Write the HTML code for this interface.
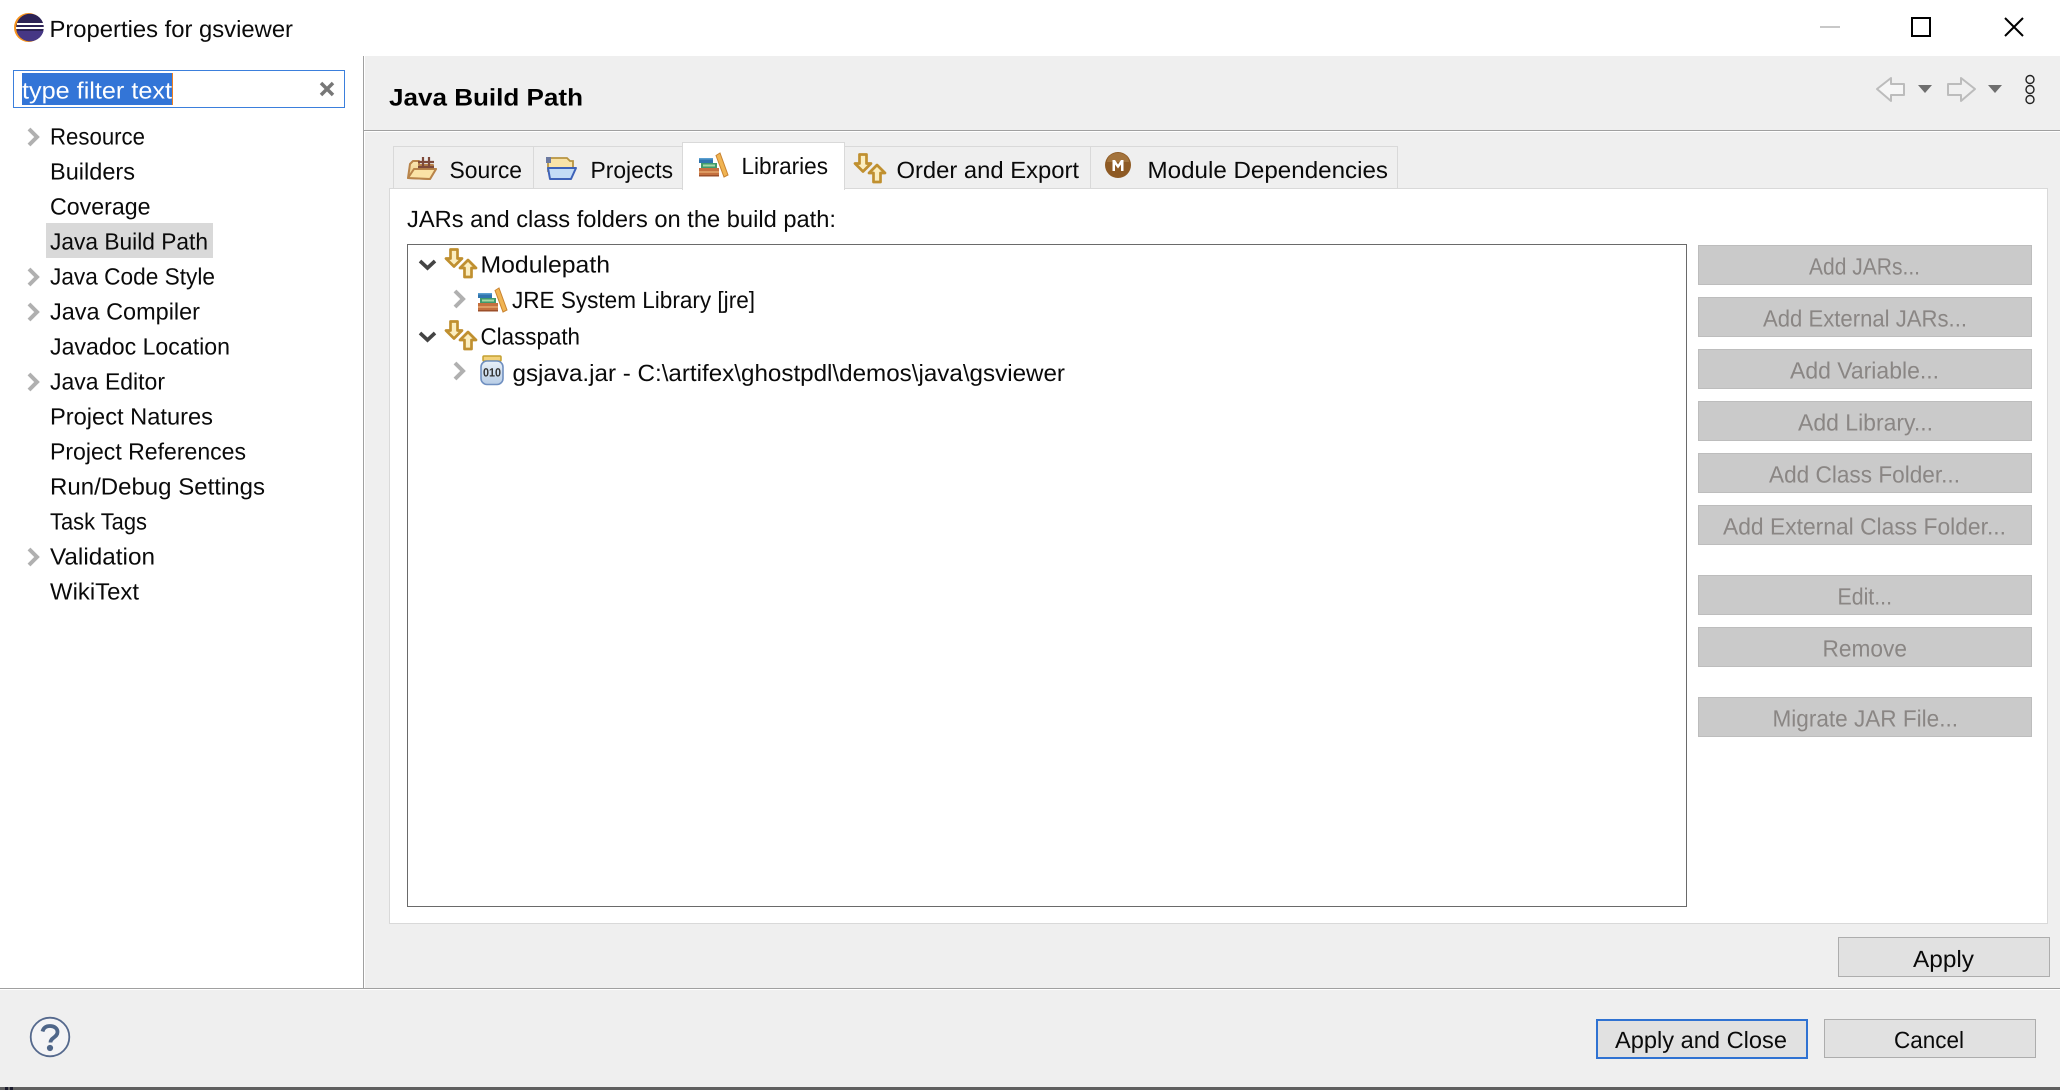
<!DOCTYPE html>
<html lang="en"><head><meta charset="utf-8"><title>Properties for gsviewer</title>
<style>
html,body{margin:0;padding:0;background:#fff;width:2060px;height:1090px;overflow:hidden}
svg{display:block}
text{font-family:"Liberation Sans",Arial,sans-serif;font-size:23.5px;fill:#0a0a0a;text-rendering:geometricPrecision}
.c{shape-rendering:crispEdges}
.d{fill:#8a8684}
</style></head><body>
<svg width="2060" height="1090" viewBox="0 0 2060 1090" xmlns="http://www.w3.org/2000/svg">
<defs>
<linearGradient id="fold" x1="0" y1="0" x2="0" y2="1"><stop offset="0" stop-color="#fbe8b4"/><stop offset="1" stop-color="#e9c27a"/></linearGradient>
<linearGradient id="jar" x1="0" y1="0" x2="0" y2="1"><stop offset="0" stop-color="#e8f0f8"/><stop offset="1" stop-color="#b8cde6"/></linearGradient>
<g id="chev"><path d="M1 1 L9 9 L1 17" fill="none" stroke="#b0b0b0" stroke-width="4"/></g>
<g id="arrows">
<path d="M4.500 1.500h7v9h4.500l-8 8-8-8h4.500z" fill="#fbeec0" stroke="#c09030" stroke-width="2.700" stroke-linejoin="round"/>
<path d="M22 12l8 8h-4.500v9h-7v-9h-4.500z" fill="#fbeec0" stroke="#c09030" stroke-width="2.700" stroke-linejoin="round"/>
</g>
<g id="books">
<path d="M0 23V15h20v8z" fill="#c4703f"/><path d="M0 18h20v2H0z" fill="#dd9a62"/><path d="M0 22h20v1.500H0z" fill="#9c4f2a"/>
<path d="M2 15V10h16v5z" fill="#3f9a6d"/><path d="M4 11.500h12v2H4z" fill="#a5d8a5"/>
<path d="M0 10V5h14v5z" fill="#2f74ae"/><path d="M0 5h14v1.500H0z" fill="#5a9fd0"/>
<path d="M17 2.500l4-2.500 8 22-4 2z" fill="#f0b452" stroke="#c98330" stroke-width="1"/>
</g>
</defs>

<!-- surfaces -->
<g class="c">
<rect width="2060" height="1090" fill="#fff"/>
<rect x="364" y="56" width="1696" height="932" fill="#efefef"/>
<rect x="0" y="989" width="2060" height="98" fill="#efefef"/>
<rect x="363" y="56" width="1" height="932" fill="#a0a0a0"/>
<rect x="364" y="56" width="1" height="932" fill="#fff"/>
<rect x="364" y="130" width="1696" height="1" fill="#a0a0a0"/>
<rect x="364" y="131" width="1696" height="1" fill="#fff"/>
<rect x="0" y="988" width="2060" height="1" fill="#a0a0a0"/>
<rect x="0" y="989" width="2060" height="1" fill="#fff"/>
<rect x="0" y="1087" width="2060" height="3" fill="#5f5f5f"/>
<rect x="5" y="1087" width="3" height="3" fill="#1c1c2c"/><rect x="10" y="1087" width="3" height="3" fill="#1c1c2c"/>
</g>

<!-- title bar -->
<circle cx="28.500" cy="27.500" r="14.500" fill="#f7941e"/>
<circle cx="30" cy="27.500" r="13.800" fill="#2c2255"/>
<path d="M16.500 31h27a14 14 0 0 1-27 0z" fill="#463785"/>
<g class="c" fill="#fff"><rect x="17" y="23" width="27" height="2"/><rect x="16" y="27" width="28" height="2"/></g>
<text x="49.500" y="37" textLength="243.500" lengthAdjust="spacingAndGlyphs">Properties for gsviewer</text>
<g class="c">
<rect x="1820" y="26" width="20" height="2" fill="#c8c8c8"/>
<rect x="1912" y="18" width="18" height="18" fill="none" stroke="#000" stroke-width="2"/>
</g>
<path d="M2005 18l18 18M2023 18l-18 18" stroke="#000" stroke-width="2" fill="none"/>

<!-- filter -->
<rect class="c" x="13.500" y="70.500" width="331" height="37" fill="#fff" stroke="#3b7fdc"/>
<rect class="c" x="22" y="73" width="150" height="32" fill="#3375d7"/>
<rect class="c" x="172" y="73" width="1" height="32" fill="#f08020"/>
<text x="22" y="98.500" textLength="150" lengthAdjust="spacingAndGlyphs" style="fill:#fff">type filter text</text>
<path d="M321 83l12 12M333 83l-12 12" stroke="#777" stroke-width="3.500" fill="none"/>

<!-- sidebar tree -->
<rect class="c" x="46" y="223" width="167" height="35" fill="#d9d9d9"/>
<use href="#chev" x="28" y="128"/>
<use href="#chev" x="28" y="268"/>
<use href="#chev" x="28" y="303"/>
<use href="#chev" x="28" y="373"/>
<use href="#chev" x="28" y="548"/>
<text x="50" y="144.500" textLength="95" lengthAdjust="spacingAndGlyphs">Resource</text>
<text x="50" y="179.500" textLength="85" lengthAdjust="spacingAndGlyphs">Builders</text>
<text x="50" y="214.500" textLength="100.500" lengthAdjust="spacingAndGlyphs">Coverage</text>
<text x="50" y="249.500" textLength="158" lengthAdjust="spacingAndGlyphs">Java Build Path</text>
<text x="50" y="284.500" textLength="165" lengthAdjust="spacingAndGlyphs">Java Code Style</text>
<text x="50" y="319.500" textLength="150" lengthAdjust="spacingAndGlyphs">Java Compiler</text>
<text x="50" y="354.500" textLength="180" lengthAdjust="spacingAndGlyphs">Javadoc Location</text>
<text x="50" y="389.500" textLength="115" lengthAdjust="spacingAndGlyphs">Java Editor</text>
<text x="50" y="424.500" textLength="163" lengthAdjust="spacingAndGlyphs">Project Natures</text>
<text x="50" y="459.500" textLength="196" lengthAdjust="spacingAndGlyphs">Project References</text>
<text x="50" y="494.500" textLength="215" lengthAdjust="spacingAndGlyphs">Run/Debug Settings</text>
<text x="50" y="529.500" textLength="97" lengthAdjust="spacingAndGlyphs">Task Tags</text>
<text x="50" y="564.500" textLength="105" lengthAdjust="spacingAndGlyphs">Validation</text>
<text x="50" y="599.500" textLength="89" lengthAdjust="spacingAndGlyphs">WikiText</text>

<!-- header -->
<text x="389" y="105.500" textLength="194" lengthAdjust="spacingAndGlyphs" style="font-weight:700;font-size:24px;fill:#000">Java Build Path</text>
<path d="M1877 89l14-11v6h13v11h-13v6z" fill="#f6f6f6" stroke="#bcbcbc" stroke-width="2" stroke-linejoin="round"/>
<path d="M1918 85h14l-7 8z" fill="#6e6e6e"/>
<path d="M1975 89l-14-11v6h-13v11h13v6z" fill="#f0f0f0" stroke="#bcbcbc" stroke-width="2" stroke-linejoin="round"/>
<path d="M1988 85h14l-7 8z" fill="#6e6e6e"/>
<g fill="none" stroke="#222" stroke-width="1.400"><circle cx="2030" cy="79.500" r="4"/><circle cx="2030" cy="89.500" r="4"/><circle cx="2030" cy="99.500" r="4"/></g>

<!-- tabs + panel -->
<g class="c">
<rect x="389.500" y="188.500" width="1658" height="735" fill="#fff" stroke="#d9d9d9"/>
<rect x="393.500" y="146.500" width="1004" height="42" fill="#efefef" stroke="#d9d9d9"/>
<rect x="533" y="146" width="1" height="42" fill="#d9d9d9"/>
<rect x="1090" y="146" width="1" height="42" fill="#d9d9d9"/>
<rect x="682.500" y="142.500" width="162" height="47" fill="#fff" stroke="#d9d9d9"/>
<rect x="683" y="188" width="161" height="2" fill="#fff"/>
</g>
<!-- source icon -->
<path d="M408 178l2-14 3-3h6v4h14v4h3l-6 10z" fill="url(#fold)" stroke="#b8844a" stroke-width="2" stroke-linejoin="round"/>
<path d="M408 178l6-9h22l-6 10z" fill="#fbe3a6" stroke="#b8844a" stroke-width="2" stroke-linejoin="round"/>
<path d="M418 162h16M418 167h16M423 157v11M429 157v11" stroke="#7e4a3a" stroke-width="2.200" fill="none"/>
<text x="449.500" y="178" textLength="72.500" lengthAdjust="spacingAndGlyphs">Source</text>
<!-- projects icon -->
<path d="M548 158h19l3 3h3v10h-25z" fill="#f9e3a8" stroke="#b89440" stroke-width="1.800"/>
<rect x="546" y="157" width="5" height="6" fill="#6c7aa0"/>
<path d="M550 179l-2-11 28 0-5 11z" fill="#c3dcf6" stroke="#3e62b8" stroke-width="2" stroke-linejoin="round"/>
<text x="590.500" y="178" textLength="82.500" lengthAdjust="spacingAndGlyphs">Projects</text>
<!-- libraries icon -->
<use href="#books" x="699" y="153"/>
<text x="741.500" y="174" textLength="86.500" lengthAdjust="spacingAndGlyphs">Libraries</text>
<!-- order icon -->
<use href="#arrows" x="855" y="153"/>
<text x="896.500" y="178" textLength="182.500" lengthAdjust="spacingAndGlyphs">Order and Export</text>
<!-- M icon -->
<circle cx="1118" cy="165" r="13" fill="#8e5a24"/>
<path d="M1107 162a11 9 0 0 1 22 0z" fill="#b58850" opacity=".55"/>
<path d="M1112.500 171v-11h2.500l3 4.500 3-4.500h2.500v11h-2.500v-6.500l-3 4-3-4v6.500z" fill="#fff"/>
<text x="1147.500" y="178" textLength="240.500" lengthAdjust="spacingAndGlyphs">Module Dependencies</text>

<text x="407" y="227" textLength="429" lengthAdjust="spacingAndGlyphs">JARs and class folders on the build path:</text>

<!-- tree -->
<rect class="c" x="407.500" y="244.500" width="1279" height="662" fill="#fff" stroke="#6a6a6a"/>
<path d="M420 261l7.500 7 7.500-7" fill="none" stroke="#444" stroke-width="3.600"/>
<use href="#arrows" x="446" y="248"/>
<text x="480.500" y="272.500" textLength="129.500" lengthAdjust="spacingAndGlyphs">Modulepath</text>
<use href="#chev" x="454" y="290"/>
<use href="#books" x="478" y="288"/>
<text x="512" y="308" textLength="243" lengthAdjust="spacingAndGlyphs">JRE System Library [jre]</text>
<path d="M420 333l7.500 7 7.500-7" fill="none" stroke="#444" stroke-width="3.600"/>
<use href="#arrows" x="446" y="320"/>
<text x="480.500" y="344.500" textLength="99.500" lengthAdjust="spacingAndGlyphs">Classpath</text>
<use href="#chev" x="454" y="362"/>
<rect x="483" y="356" width="18" height="5" rx="1" fill="#f2d27a" stroke="#c4a030" stroke-width="1.500"/>
<rect x="481" y="361" width="22" height="23.500" rx="6" fill="url(#jar)" stroke="#6f8fc0" stroke-width="1.600"/>
<text x="483" y="376.500" textLength="18" lengthAdjust="spacingAndGlyphs" style="font-size:12px;font-weight:700;fill:#333">010</text>
<text x="512.500" y="381" textLength="552.500" lengthAdjust="spacingAndGlyphs">gsjava.jar - C:\artifex\ghostpdl\demos\java\gsviewer</text>

<!-- disabled buttons -->
<g class="c" fill="#cacaca" stroke="#bdbdbd">
<rect x="1698.500" y="245.500" width="333" height="39"/>
<rect x="1698.500" y="297.500" width="333" height="39"/>
<rect x="1698.500" y="349.500" width="333" height="39"/>
<rect x="1698.500" y="401.500" width="333" height="39"/>
<rect x="1698.500" y="453.500" width="333" height="39"/>
<rect x="1698.500" y="505.500" width="333" height="39"/>
<rect x="1698.500" y="575.500" width="333" height="39"/>
<rect x="1698.500" y="627.500" width="333" height="39"/>
<rect x="1698.500" y="697.500" width="333" height="39"/>
</g>
<text class="d" x="1809" y="274.500" textLength="111" lengthAdjust="spacingAndGlyphs">Add JARs...</text>
<text class="d" x="1763" y="326.500" textLength="204" lengthAdjust="spacingAndGlyphs">Add External JARs...</text>
<text class="d" x="1790" y="378.500" textLength="149" lengthAdjust="spacingAndGlyphs">Add Variable...</text>
<text class="d" x="1798" y="430.500" textLength="135" lengthAdjust="spacingAndGlyphs">Add Library...</text>
<text class="d" x="1769" y="482.500" textLength="191" lengthAdjust="spacingAndGlyphs">Add Class Folder...</text>
<text class="d" x="1723" y="534.500" textLength="283" lengthAdjust="spacingAndGlyphs">Add External Class Folder...</text>
<text class="d" x="1837.500" y="604.500" textLength="54.500" lengthAdjust="spacingAndGlyphs">Edit...</text>
<text class="d" x="1822.500" y="656.500" textLength="84.500" lengthAdjust="spacingAndGlyphs">Remove</text>
<text class="d" x="1772.500" y="726.500" textLength="185.500" lengthAdjust="spacingAndGlyphs">Migrate JAR File...</text>

<!-- bottom buttons -->
<g class="c" fill="#e1e1e1">
<rect x="1838.500" y="937.500" width="211" height="39" stroke="#adadad"/>
<rect x="1824.500" y="1019.500" width="211" height="38" stroke="#adadad"/>
<rect x="1597" y="1020" width="210" height="38" stroke="#2f72d2" stroke-width="2"/>
</g>
<text x="1913" y="967" textLength="61" lengthAdjust="spacingAndGlyphs">Apply</text>
<text x="1615" y="1048" textLength="172" lengthAdjust="spacingAndGlyphs">Apply and Close</text>
<text x="1894" y="1048" textLength="70" lengthAdjust="spacingAndGlyphs">Cancel</text>

<!-- help -->
<circle cx="50" cy="1037" r="19.300" fill="#f4f4f6" stroke="#55698d" stroke-width="1.800"/>
<path d="M42.500 1031.500c1-4 4-5.500 7.500-5.500 4.500 0 7.500 2.500 7.500 6 0 5.500-7 5.500-7 10.500" fill="none" stroke="#4f6689" stroke-width="3.800"/>
<circle cx="50" cy="1048" r="3.100" fill="#4f6689"/>
</svg>
</body></html>
